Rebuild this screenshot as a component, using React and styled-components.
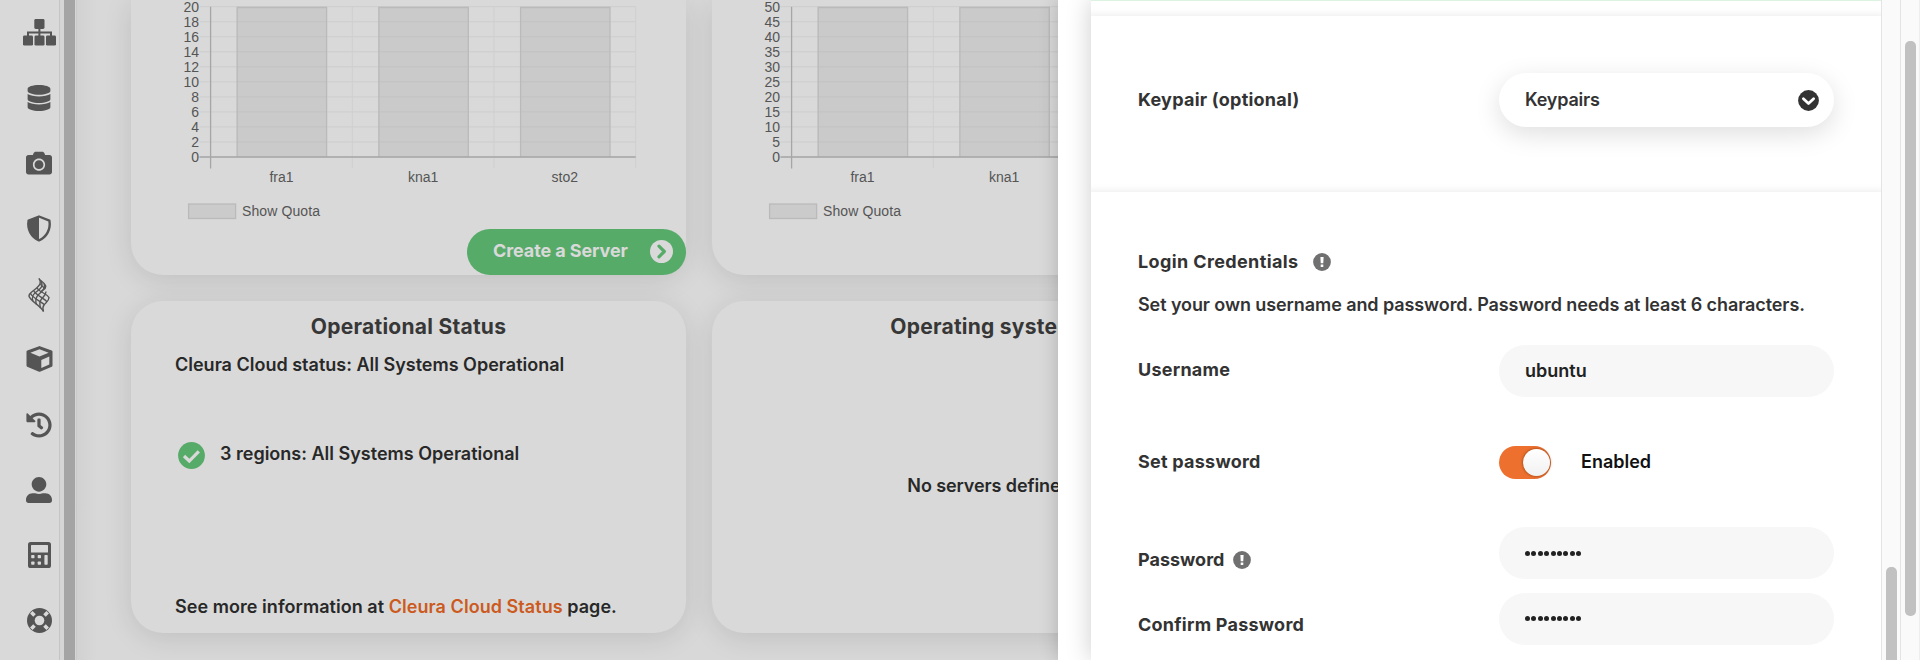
import React from "react";
import styled, { createGlobalStyle, css } from "styled-components";
import { FaCamera, FaDatabase, FaHistory, FaUserAlt } from "react-icons/fa";

const GlobalStyle = createGlobalStyle`
  *, *::before, *::after { box-sizing: border-box; }
  body { margin: 0; background: #d9d9d9; }
  #root { height: 660px; overflow: hidden; }
`;

const Page = styled.div`
  position: relative;
  display: flex;
  width: 1920px;
  height: 660px;
  overflow: hidden;
  background: #d9d9d9;
  color: #282828;
  font-family: Inter, "Liberation Sans", sans-serif;
  font-size: 18px;
  font-weight: 600;
  line-height: 24px;
`;

/* ---- sidebar ---- */

const Sidebar = styled.nav`
  display: flex;
  flex: none;
  flex-direction: column;
  align-items: center;
  width: 59px;
  padding-left: 19px;
  color: #555;
`;

const NavItem = styled.a`
  display: flex;
  flex: none;
  align-items: center;
  justify-content: center;
  width: 34px;
  height: 65.3px;
  padding-top: 0.4px;

  svg { display: block; overflow: visible; }
`;

const SidebarTrack = styled.div`
  flex: none;
  width: 18px;
  padding: 0 2px 0 4px;
  background: #d5d5d5;
  border-left: 1px solid #c4c4c4;
  border-right: 1px solid #cacaca;
`;

const SidebarThumb = styled.div`
  width: 11px;
  height: 100%;
  background: #a4a4a4;
`;

/* ---- dashboard ---- */

const Main = styled.main`
  display: grid;
  flex: 1;
  grid-template-columns: 555px 555px;
  grid-template-rows: 275px 332.5px;
  gap: 25.5px 26px;
  padding-left: 54px;
  overflow: hidden;
  background: linear-gradient(90deg, #d1d1d1, #d8d8d8 20px);
`;

const Card = styled.section`
  display: flex;
  flex-direction: column;
  background: #d9d9d9;
  border-radius: ${(p) => (p.$cut ? "0 0 32px 32px" : "32px")};
  box-shadow: 0 5px 28px rgba(0, 0, 0, 0.115);
  ${(p) => !p.$cut && css`padding: 12px 44px 14.5px;`}
`;

const Chart = styled.svg`
  display: block;
  flex: none;
  font-family: "Liberation Sans", Arial, sans-serif;
  font-size: 14px;
  font-weight: 400;
  fill: #555;
`;

const CreateButton = styled.button`
  display: flex;
  align-items: center;
  justify-content: space-between;
  align-self: flex-end;
  width: 219px;
  height: 46.5px;
  margin-top: auto;
  padding: 0 13px 0 26px;
  border: 0;
  border-radius: 24px;
  background: #57ab69;
  color: #d9d9d9;
  font: 700 18px/24px Inter, sans-serif;
  letter-spacing: -0.1px;

  span { padding-bottom: 2px; }
`;

const CardTitle = styled.h2`
  margin: 0;
  color: #373737;
  font-size: 21px;
  font-weight: 700;
  line-height: 28px;
  letter-spacing: 0.25px;
  text-align: center;
`;

const CardText = styled.p`
  margin: 0;
  white-space: nowrap;
  ${(p) => p.$lead && css`margin-top: 12px;`}
  ${(p) => p.$footer && css`
    margin-top: auto;
    letter-spacing: 0.05px;
  `}
`;

const StatusRow = styled.div`
  display: flex;
  align-items: center;
  gap: 15px;
  height: 28px;
  margin-top: 64.5px;
  padding-left: 3px;

  p { padding-bottom: 2px; }
`;

const StatusLink = styled.a`
  color: #cc5a1e;
`;

const EmptyText = styled.p`
  margin: 133px 0 0;
  text-align: center;
  letter-spacing: -0.1px;
`;

/* ---- drawer ---- */

const Drawer = styled.aside`
  position: absolute;
  top: 0;
  right: 0;
  display: flex;
  width: 862px;
  height: 660px;
  padding-left: 33px;
  background: #fff;
  box-shadow: 0 0 18px rgba(0, 0, 0, 0.2);
  color: #333;
`;

const Panel = styled.div`
  flex: none;
  width: 790px;
  height: 660px;
  box-shadow: 0 0 24px rgba(0, 0, 0, 0.2);
  clip-path: inset(0 0 0 -33px);
`;

const Sections = styled.div`
  height: 100%;
  overflow: hidden;
`;

const Section = styled.section`
  height: ${(p) => p.$height}px;
  padding: ${(p) => p.$top || 0}px 47px 0;
  background: #fff;
  box-shadow: 0 4px 8px 5px rgba(0, 0, 0, 0.08);
  ${(p) => p.$accent && css`border-top: 1px solid #dcf3e1;`}
`;

const Heading = styled.h3`
  display: flex;
  align-items: center;
  gap: 15px;
  height: 48px;
  margin: 0;
  padding-top: 1px;
  font-size: 18px;
  font-weight: 700;
  letter-spacing: 0.38px;
`;

const Description = styled.p`
  height: 40px;
  margin: 0;
  line-height: 40px;
  letter-spacing: -0.09px;
  white-space: nowrap;
`;

const Field = styled.div`
  display: flex;
  align-items: center;
  height: ${(p) => p.$height || 52}px;
  margin-top: ${(p) => p.$gap || 0}px;
`;

const Label = styled.label`
  display: flex;
  flex: none;
  align-items: center;
  gap: 9px;
  width: 361px;
  padding-top: ${(p) => (p.$low ? 13 : 0)}px;
  padding-bottom: ${(p) => (p.$low ? 0 : 1)}px;
  font-weight: 700;
  letter-spacing: ${(p) => (p.$tight ? 0 : 0.24)}px;
`;

const pill = css`
  width: 334.5px;
  height: 100%;
  padding: 0 26px;
  border: 0;
  border-radius: 27px;
  font: 600 18px/24px Inter, sans-serif;
`;

const Select = styled.button`
  ${pill}
  display: flex;
  align-items: center;
  justify-content: space-between;
  padding-right: 15px;
  background: #fff;
  color: #333;
  letter-spacing: -0.2px;
  box-shadow: 0 7px 26px rgba(0, 0, 0, 0.13);

  span { padding-bottom: 1px; }
`;

const Input = styled.div`
  ${pill}
  display: flex;
  align-items: center;
  background: #f7f7f7;
  color: #222;
`;

const Dots = styled.span`
  display: flex;
  gap: 1.4px;
`;

const Dot = styled.i`
  width: 5px;
  height: 5px;
  border-radius: 50%;
  background: #222;
`;

const Toggle = styled.span`
  display: flex;
  align-items: center;
  justify-content: flex-end;
  width: 52px;
  height: 33px;
  margin-right: 30px;
  padding-right: 1px;
  border-radius: 17px;
  background: #ee702e;
`;

const Knob = styled.span`
  width: 27px;
  height: 27px;
  border-radius: 50%;
  background: linear-gradient(#fff, #f1f1f1);
  box-shadow: 0 0 3px rgba(0, 0, 0, 0.5);
`;

const ToggleText = styled.span`
  padding-bottom: 1px;
  color: #111;
`;

const Track = styled.div`
  flex: none;
  width: ${(p) => p.$width}px;
  padding: ${(p) => p.$offset}px 0 0 4px;
  background: #fafafa;
  border-left: 1px solid #e4e4e4;
  ${(p) => p.$last && css`border-right: 1px solid #eee;`}
`;

const Thumb = styled.div`
  width: 10.5px;
  height: ${(p) => p.$height}px;
  border-radius: 5px;
  background: #c1c1c1;
`;

/* ---- icons ---- */

const SitemapIcon = () => (
  <svg width="33" height="27" viewBox="0 0 33 27" fill="currentColor">
    <rect x="11.3" y="0" width="10.2" height="10" rx="1.4" />
    <rect x="0" y="16.6" width="10" height="10" rx="1.4" />
    <rect x="11.5" y="16.6" width="10" height="10" rx="1.4" />
    <rect x="23" y="16.6" width="10" height="10" rx="1.4" />
    <path d="M16.4 9v9M5 18v-4.6h23V18" fill="none" stroke="currentColor" strokeWidth="2" />
  </svg>
);

const ShieldIcon = () => (
  <svg width="26" height="27" viewBox="0 0 26 27">
    <path d="M13 1.5 23.4 5.6C24.9 14.5 20.5 22 13 25.4 5.5 22 1.1 14.5 2.6 5.6Z" fill="none" stroke="currentColor" strokeWidth="2.4" strokeLinejoin="round" />
    <path d="M13 1.5V25.4C5.5 22 1.1 14.5 2.6 5.6Z" fill="currentColor" />
  </svg>
);

const LatticeIcon = () => (
  <svg width="22" height="34" viewBox="0 -1 22 34" fill="none" stroke="currentColor" strokeWidth="1.35">
    <path d="M11 .5C14.5 6 10 9 5.5 12.5 1.5 15.7.3 17 1.2 19" />
    <path d="M12.5 2.5C16.5 8 12 11.5 7.5 14.5 4 17.5 3.5 19.5 5 23" />
    <path d="M16 5.5C18 10 14.5 13 10.5 16.5 7.5 19.5 7 22 8.5 26.5" />
    <path d="M18 13.5C18 17 15.5 18.5 13.5 21 11 24 11.5 26.5 12.5 30" />
    <path d="M21 19.5C21 23 18 24.5 16 27 14.5 29 14.5 31 15.5 33.5" />
    <path d="M11 .5C12 3 17.5 5 17.8 8.5 18 11 14.5 12 13.5 13" />
    <path d="M1.2 18.5C3 23.5 12.5 27.5 15.5 33.5" />
    <path d="M2.5 15.5C5 20.5 14 24 16.5 27" />
    <path d="M5.5 12.5C8 17.5 16.5 20 19 24" />
    <path d="M9 9.8C11 14.5 19 15 21.2 20" />
    <path d="M12.5 5.5C13 8 15 9 17 10.5" />
  </svg>
);

const CubeIcon = () => (
  <svg width="27" height="26" viewBox="0 0 27 26">
    <path d="M13.5 1.3 25.3 5.6V19.6L13.5 24.6 1.7 19.6V5.6Z" fill="currentColor" stroke="currentColor" strokeWidth="2.4" strokeLinejoin="round" />
    <path d="M13.5 3.2 22.6 6.8 13.5 10.6 4.4 6.8Z" fill="#d9d9d9" />
    <path d="M15.3 14 23.3 10.6V18.4L15.3 21.9Z" fill="#d9d9d9" />
  </svg>
);

const CalculatorIcon = () => (
  <svg width="23" height="26" viewBox="0 0 23 26">
    <rect width="23" height="26" rx="2.6" fill="currentColor" />
    <g fill="#d9d9d9">
      <rect x="3" y="3" width="17" height="7.4" rx=".5" />
      <rect x="3.2" y="13" width="3.3" height="3.3" rx=".7" />
      <rect x="9.7" y="13" width="3.3" height="3.3" rx=".7" />
      <rect x="3.2" y="19.5" width="3.3" height="3.3" rx=".7" />
      <rect x="9.7" y="19.5" width="3.3" height="3.3" rx=".7" />
      <rect x="16.4" y="13" width="3.3" height="9.8" rx=".7" />
    </g>
  </svg>
);

const LifeRingIcon = () => (
  <svg width="25" height="25" viewBox="-12.5 -12.5 25 25">
    <circle r="12.5" fill="currentColor" />
    <circle r="4.8" fill="#d9d9d9" />
    <g stroke="#d9d9d9" strokeWidth="3.6">
      <path d="M-8.2-8.2-5-5M8.2-8.2 5-5M-8.2 8.2-5 5M8.2 8.2 5 5" />
    </g>
  </svg>
);

const ArrowIcon = () => (
  <svg width="23" height="23" viewBox="0 0 23 23">
    <circle cx="11.5" cy="11.5" r="11.5" fill="#d9d9d9" />
    <path d="M9 6.2 14.3 11.5 9 16.8" fill="none" stroke="#57ab69" strokeWidth="3.2" strokeLinecap="round" strokeLinejoin="round" />
  </svg>
);

const CheckIcon = () => (
  <svg width="27" height="27" viewBox="0 0 27 27">
    <circle cx="13.5" cy="13.5" r="13.4" fill="#57ab69" />
    <path d="M6 14 11.3 19 20.8 9.3" fill="none" stroke="#d9d9d9" strokeWidth="3.2" />
  </svg>
);

const ChevronIcon = () => (
  <svg width="21" height="21" viewBox="0 0 21 21">
    <circle cx="10.5" cy="10.5" r="10.4" fill="#333" />
    <path d="M5.4 8.8 10.5 13.5 15.6 8.8" fill="none" stroke="#fff" strokeWidth="2.8" strokeLinecap="round" strokeLinejoin="round" />
  </svg>
);

const InfoIcon = () => (
  <svg width="18" height="18" viewBox="0 0 18 18">
    <circle cx="9" cy="9" r="8.9" fill="#707070" />
    <path d="M7.4 4h3.2l-.3 6.3H7.7ZM7.7 11.6h2.6V14H7.7Z" fill="#fff" />
  </svg>
);

const NAV = [
  ["network", <SitemapIcon />],
  ["volumes", <FaDatabase size={26} />],
  ["snapshots", <FaCamera size={26} />],
  ["security", <ShieldIcon />],
  ["clusters", <LatticeIcon />],
  ["objects", <CubeIcon />],
  ["history", <FaHistory size={26} />],
  ["users", <FaUserAlt size={26} />],
  ["billing", <CalculatorIcon />],
  ["support", <LifeRingIcon />],
];

const AXIS = 79.6;
const COLUMN = 141.7;
const BASE = 157;
const STEP = 15.03;

function QuotaChart({ tick }) {
  const steps = Array.from({ length: 11 }, (_, i) => i);
  return (
    <Chart width="555" height="225" viewBox="0 0 555 225">
      {steps.map((i) => (
        <g key={i}>
          <path d={`M68.5 ${BASE - i * STEP}H${AXIS + 3 * COLUMN}`} stroke="#cdcdcd" />
          <text x="68" y={BASE + 5 - i * STEP} textAnchor="end">{i * tick}</text>
        </g>
      ))}
      {[1, 2, 3].map((i) => (
        <path key={i} d={`M${AXIS + i * COLUMN} 6.7V168`} stroke="#cfcfcf" />
      ))}
      {["fra1", "kna1", "sto2"].map((name, i) => (
        <g key={name}>
          <rect x={AXIS + i * COLUMN + 26} y="6.7" width="90" height="150.3" fill="#a0a0a0" fillOpacity=".25" />
          <path d={`M${AXIS + i * COLUMN + 26.6} 157V7.5h89.4V157`} fill="none" stroke="#bababa" strokeWidth="1.3" />
          <text x={AXIS + (i + 0.5) * COLUMN} y="182" textAnchor="middle">{name}</text>
        </g>
      ))}
      <path d={`M68.5 ${BASE}H${AXIS + 3 * COLUMN}M${AXIS} 6.7V168.5`} stroke="#a6a6a6" strokeWidth="1.3" />
      <rect x="57.6" y="204" width="47" height="14.5" fill="#cbcbcb" stroke="#bababa" strokeWidth="1.3" />
      <text x="111" y="215.5" textLength="78">Show Quota</text>
    </Chart>
  );
}

const Password = () => (
  <Input>
    <Dots>{Array.from({ length: 9 }, (_, i) => <Dot key={i} />)}</Dots>
  </Input>
);

export default function App() {
  return (
    <Page>
      <GlobalStyle />
      <Sidebar>
        {NAV.map(([name, icon]) => <NavItem key={name}>{icon}</NavItem>)}
      </Sidebar>
      <SidebarTrack><SidebarThumb /></SidebarTrack>

      <Main>
        <Card $cut>
          <QuotaChart tick={2} />
          <CreateButton><span>Create a Server</span><ArrowIcon /></CreateButton>
        </Card>
        <Card $cut>
          <QuotaChart tick={5} />
        </Card>
        <Card>
          <CardTitle>Operational Status</CardTitle>
          <CardText $lead>Cleura Cloud status: All Systems Operational</CardText>
          <StatusRow>
            <CheckIcon />
            <CardText>3 regions: All Systems Operational</CardText>
          </StatusRow>
          <CardText $footer>
            See more information at <StatusLink>Cleura Cloud Status</StatusLink> page.
          </CardText>
        </Card>
        <Card>
          <CardTitle>Operating systems</CardTitle>
          <EmptyText>No servers defined</EmptyText>
        </Card>
      </Main>

      <Drawer>
        <Panel>
          <Sections>
            <Section $height={16} $accent />
            <Section $height={176} $top={57}>
              <Field $height={54}>
                <Label>Keypair (optional)</Label>
                <Select><span>Keypairs</span><ChevronIcon /></Select>
              </Field>
            </Section>
            <Section $height={480} $top={45}>
              <Heading>Login Credentials <InfoIcon /></Heading>
              <Description>
                Set your own username and password. Password needs at least 6 characters.
              </Description>
              <Field $gap={19.5}>
                <Label>Username</Label>
                <Input>ubuntu</Input>
              </Field>
              <Field $height={33} $gap={49}>
                <Label>Set password</Label>
                <Toggle><Knob /></Toggle>
                <ToggleText>Enabled</ToggleText>
              </Field>
              <Field $gap={48.5}>
                <Label $low $tight>Password <InfoIcon /></Label>
                <Password />
              </Field>
              <Field $gap={13.5}>
                <Label $low>Confirm Password</Label>
                <Password />
              </Field>
            </Section>
          </Sections>
        </Panel>
        <Track $width={19} $offset={567}><Thumb $height={110} /></Track>
        <Track $width={20} $offset={40.5} $last><Thumb $height={575} /></Track>
      </Drawer>
    </Page>
  );
}
